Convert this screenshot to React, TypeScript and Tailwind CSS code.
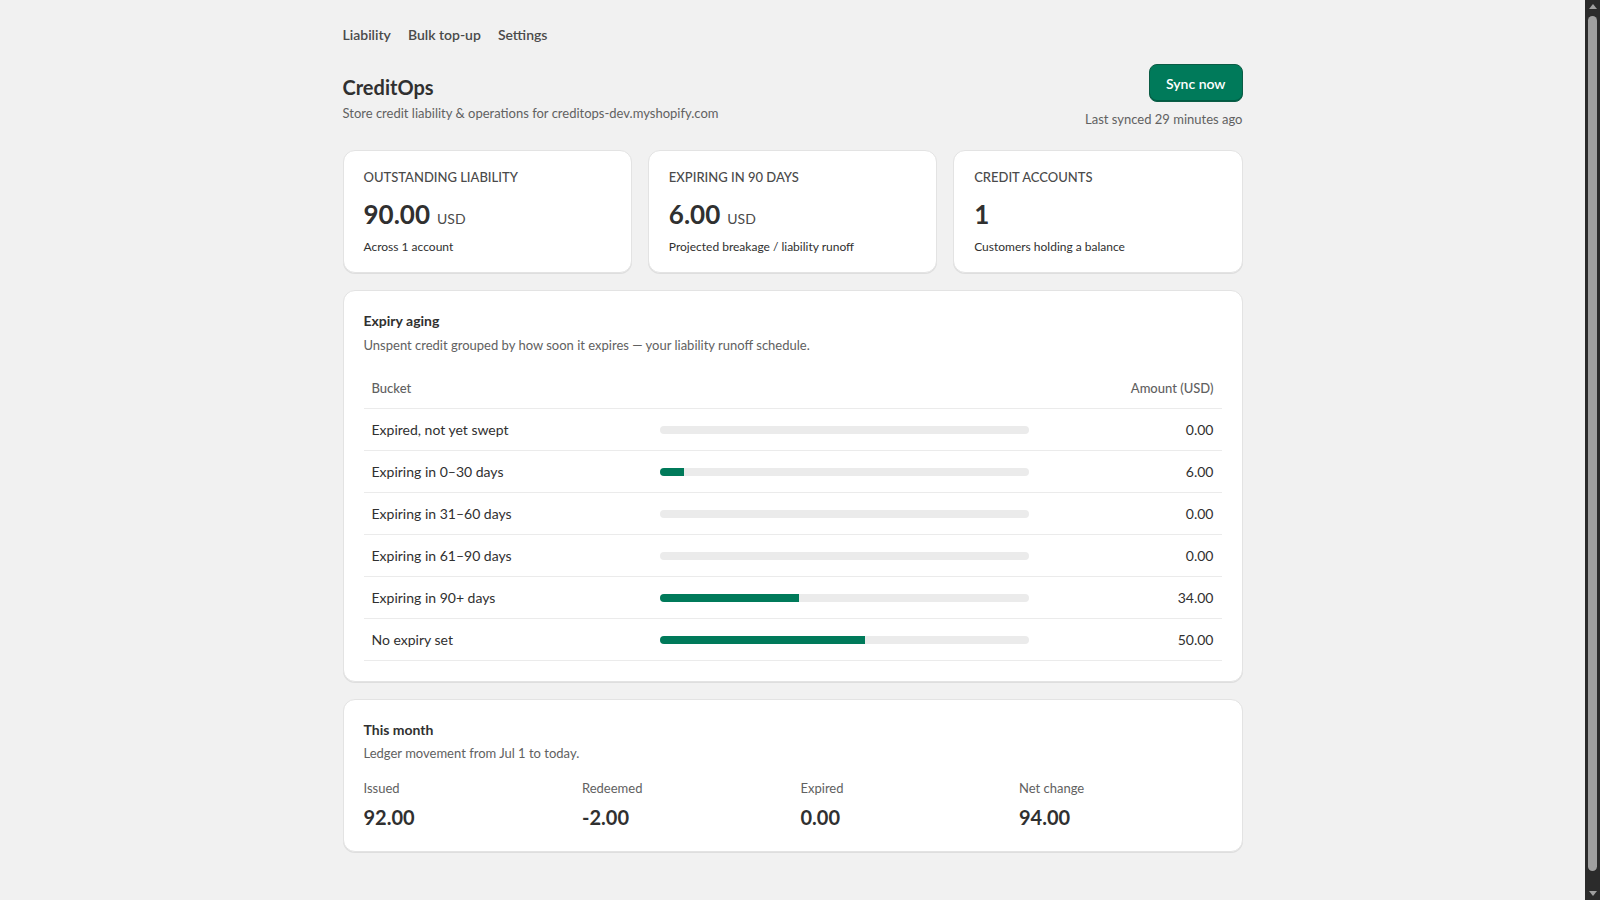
import React from 'react'

type Bucket = {
  label: string
  amount: number
}

const buckets: Bucket[] = [
  { label: 'Expired, not yet swept', amount: 0 },
  { label: 'Expiring in 0–30 days', amount: 6 },
  { label: 'Expiring in 31–60 days', amount: 0 },
  { label: 'Expiring in 61–90 days', amount: 0 },
  { label: 'Expiring in 90+ days', amount: 34 },
  { label: 'No expiry set', amount: 50 },
]

const total = 90

const month = [
  { label: 'Issued', value: '92.00' },
  { label: 'Redeemed', value: '-2.00' },
  { label: 'Expired', value: '0.00' },
  { label: 'Net change', value: '94.00' },
]

export default function App() {
  return (
    <div className="flex min-h-screen bg-[#f1f1f1] text-[#303030] [font-family:Lato,'Noto_Sans',sans-serif]">
      <main className="flex-1">
        <div className="mx-auto w-[900px] pt-[25px] pb-[83px]">
          <nav className="flex h-5 items-center gap-[17px] text-[14px] font-semibold leading-5 text-[#4a4a4a]">
            <a>Liability</a>
            <a>Bulk top-up</a>
            <a>Settings</a>
          </nav>

          <header className="mt-[19px] flex items-start justify-between">
            <div className="pt-[11px]">
              <h1 className="text-[20px] font-bold leading-6 text-[#303030]">CreditOps</h1>
              <p className="mt-1 text-[13px] leading-5 text-[#616161]">
                Store credit liability &amp; operations for creditops-dev.myshopify.com
              </p>
            </div>
            <div className="flex flex-col items-end">
              <button className="h-[38px] rounded-lg border border-[#0b5c45] bg-[#007a5a] px-4 text-[14px] font-semibold text-white shadow-[inset_0_-1px_0_0_rgba(0,0,0,0.25)]">
                Sync now
              </button>
              <p className="mt-[7px] text-[13px] leading-5 text-[#616161]">Last synced 29 minutes ago</p>
            </div>
          </header>

          <div className="mt-[21px] grid grid-cols-3 gap-4">
            <StatCard label="OUTSTANDING LIABILITY" value="90.00" unit="USD" note="Across 1 account" />
            <StatCard label="EXPIRING IN 90 DAYS" value="6.00" unit="USD" note="Projected breakage / liability runoff" />
            <StatCard label="CREDIT ACCOUNTS" value="1" note="Customers holding a balance" />
          </div>

          <section className="mt-[17px] rounded-xl border border-[#e3e3e3] bg-white px-5 pt-5 pb-5 shadow-[0_1px_0_0_rgba(0,0,0,0.08)]">
            <h2 className="text-[14px] font-bold leading-5">Expiry aging</h2>
            <p className="mt-1 text-[13px] leading-5 text-[#616161]">
              Unspent credit grouped by how soon it expires — your liability runoff schedule.
            </p>
            <div className="mt-[14px]">
              <div className="grid h-10 grid-cols-[288px_385px_1fr] items-center border-b border-[#ebebeb] text-[13px] font-medium text-[#616161]">
                <div className="px-2">Bucket</div>
                <div />
                <div className="px-2 text-right">Amount (USD)</div>
              </div>
              {buckets.map((b) => (
                <div key={b.label} className="grid h-[42px] grid-cols-[288px_385px_1fr] items-center border-b border-[#ebebeb] text-[14px]">
                  <div className="px-2">{b.label}</div>
                  <div className="px-2">
                    <div className="h-2 w-full overflow-hidden rounded-full bg-[#ebebeb]">
                      <div className="h-full bg-[#007a5a]" style={{ width: `${(b.amount / total) * 100}%` }} />
                    </div>
                  </div>
                  <div className="px-2 text-right tabular-nums">{b.amount.toFixed(2)}</div>
                </div>
              ))}
            </div>
          </section>

          <section className="mt-[17px] rounded-xl border border-[#e3e3e3] bg-white px-5 pt-5 pb-5 shadow-[0_1px_0_0_rgba(0,0,0,0.08)]">
            <h2 className="text-[14px] font-bold leading-5">This month</h2>
            <p className="mt-[3px] text-[13px] leading-5 text-[#616161]">Ledger movement from Jul 1 to today.</p>
            <div className="mt-[15px] grid grid-cols-4 gap-4">
              {month.map((m) => (
                <div key={m.label}>
                  <div className="text-[13px] leading-5 text-[#616161]">{m.label}</div>
                  <div className="mt-[5px] text-[20px] font-bold leading-7">{m.value}</div>
                </div>
              ))}
            </div>
          </section>
        </div>
      </main>

      {/* window scrollbar as seen in the screenshot */}
      <aside className="sticky top-0 flex h-screen w-[15px] shrink-0 flex-col items-center bg-[#2b2b2b] py-[4px]">
        <div className="h-0 w-0 border-x-[4px] border-b-[5px] border-x-transparent border-b-[#9f9f9f]" />
        <div className="mt-[7px] w-[9px] flex-1 rounded-full bg-[#9f9f9f]" />
        <div className="mt-[20px] h-0 w-0 border-x-[4px] border-t-[5px] border-x-transparent border-t-[#9f9f9f]" />
      </aside>
    </div>
  )
}

function StatCard({ label, value, unit, note }: {
  label: string
  value: string
  unit?: string
  note: string
}) {
  return (
    <div className="rounded-xl border border-[#e3e3e3] bg-white px-5 pt-4 pb-[17px] shadow-[0_1px_0_0_rgba(0,0,0,0.08)]">
      <div className="text-[13px] font-medium leading-5 text-[#4a4a4a]">{label}</div>
      <div className="mt-[11px] flex h-8 items-baseline">
        <span className="text-[26px] font-bold leading-8">{value}</span>
        {unit && <span className="ml-[7px] text-[14px] leading-5 text-[#4a4a4a]">{unit}</span>}
      </div>
      <div className="mt-[9px] text-[12px] leading-4 text-[#303030]">{note}</div>
    </div>
  )
}
